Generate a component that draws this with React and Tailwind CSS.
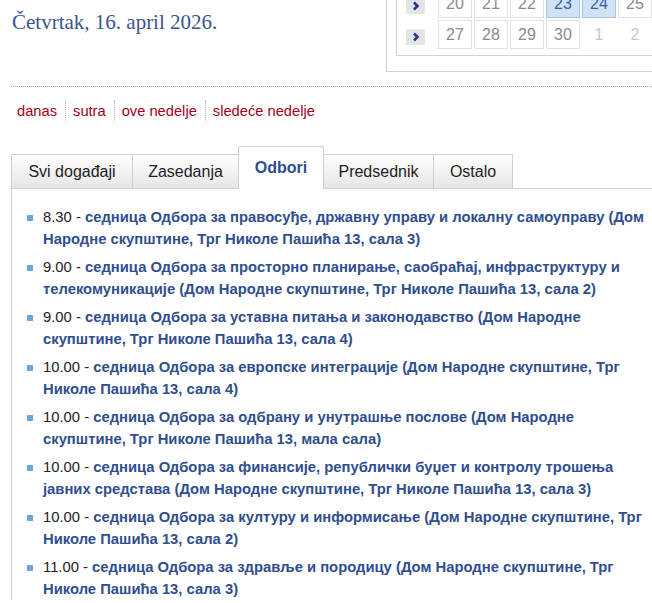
const items = [
  ['8.30', 'седница Одбора за правосуђе, државну управу и локалну самоуправу (Дом Народне скупштине, Трг Николе Пашића 13, сала 3)'],
  ['9.00', 'седница Одбора за просторно планирање, саобраћај, инфраструктуру и телекомуникације (Дом Народне скупштине, Трг Николе Пашића 13, сала 2)'],
  ['9.00', 'седница Одбора за уставна питања и законодавство (Дом Народне скупштине, Трг Николе Пашића 13, сала 4)'],
  ['10.00', 'седница Одбора за европске интеграције (Дом Народне скупштине, Трг Николе Пашића 13, сала 4)'],
  ['10.00', 'седница Одбора за одбрану и унутрашње послове (Дом Народне скупштине, Трг Николе Пашића 13, мала сала)'],
  ['10.00', 'седница Одбора за финансије, републички буџет и контролу трошења јавних средстава (Дом Народне скупштине, Трг Николе Пашића 13, сала 3)'],
  ['10.00', 'седница Одбора за културу и информисање (Дом Народне скупштине, Трг Николе Пашића 13, сала 2)'],
  ['11.00', 'седница Одбора за здравље и породицу (Дом Народне скупштине, Трг Николе Пашића 13, сала 3)'],
]

const weeks = [
  [
    { d: '20' }, { d: '21' }, { d: '22' }, { d: '23', sel: true }, { d: '24', sel: true }, { d: '25' }, { d: '26' },
  ],
  [
    { d: '27' }, { d: '28' }, { d: '29' }, { d: '30' }, { d: '1', out: true }, { d: '2', out: true }, { d: '3', out: true },
  ],
]

const tabs = ['Svi događaji', 'Zasedanja', 'Odbori', 'Predsednik', 'Ostalo']
const tabWidths = ['w-[122px]', 'w-[107px]', 'w-[86px]', 'w-[111px]', 'w-[80px]']

function Chevron() {
  return (
    <svg width="8" height="10" viewBox="0 0 8 10">
      <path d="M2 1.5 L5.5 5 L2 8.5" fill="none" stroke="#253a8c" strokeWidth="2.6" />
    </svg>
  )
}

function Calendar() {
  return (
    <div className="mt-[-14px] border border-[#d2d2d2] pl-[9px] pb-[15px] w-[320px] shrink-0">
      <div className="border border-[#d2d2d2] border-r-0 pl-[9px] pb-[6px]">
        <div className="flex flex-col gap-[2px] pt-px">
          {weeks.map((w, i) => (
            <div key={i} className="flex items-center">
              <div className="w-[19px] h-[16px] bg-[#e4e4e4] flex items-center justify-center mt-[4px]">
                <Chevron />
              </div>
              <div className="flex gap-[2px] ml-[13px]">
                {w.map((c) => (
                  <div
                    key={c.d}
                    className={
                      'w-[34px] h-[29px] flex items-center justify-center text-[16px] ' +
                      (c.sel
                        ? 'bg-[#cfe2f6] border border-[#a8c2e0] text-[#3b5ea6]'
                        : c.out
                        ? 'text-[#c8c8c8]'
                        : 'border border-[#e2e2e2] text-[#8a8a8a]')
                    }
                  >
                    {c.d}
                  </div>
                ))}
              </div>
            </div>
          ))}
        </div>
      </div>
    </div>
  )
}

export default function App() {
  return (
    <div className="w-[652px] h-[603px] overflow-hidden bg-white font-['Liberation_Sans',Arial,sans-serif]">
      {/* Header */}
      <div className="flex items-start h-[86px]">
        <div className="w-[386px] shrink-0 pl-[12px] pt-[8px]">
          <div className="font-['Liberation_Serif','Times_New_Roman',serif] text-[21px] leading-[28px] text-[#38558f]">
            Četvrtak, 16. april 2026.
          </div>
        </div>
        <Calendar />
      </div>

      <div className="ml-[11px] border-t border-dotted border-[#a6a6a6]" />

      {/* Quick links */}
      <ul className="flex ml-[17px] mt-[13px] text-[14.7px] leading-[22px] text-[#a3001a]">
        {['danas', 'sutra', 'ove nedelje', 'sledeće nedelje'].map((l, i) => (
          <li key={l} className={i === 0 ? 'pr-[8px]' : 'pl-[7px] pr-[8px] border-l border-dotted border-[#b5b5b5]'}>
            {l}
          </li>
        ))}
      </ul>

      {/* Tabs */}
      <div className="mt-[24px] ml-[11px]">
        <div className="flex items-end relative z-10 -mb-px">
          {tabs.map((t, i) =>
            t === 'Odbori' ? (
              <div
                key={t}
                className={`${tabWidths[i]} h-[43px] bg-white border border-b-0 border-[#cfcfcf] rounded-t-[3px] -ml-px flex items-center justify-center text-[16px] font-bold text-[#2e4d8f] pb-[1px]`}
              >
                {t}
              </div>
            ) : (
              <div
                key={t}
                className={`${tabWidths[i]} h-[35px] bg-gradient-to-b from-white to-[#e6e6e6] border border-[#cfcfcf] ${i === 0 ? '' : '-ml-px'} flex items-center justify-center text-[16px] text-[#1e1e1e]`}
              >
                {t}
              </div>
            )
          )}
        </div>

        <div className="border-t border-l border-[#cfcfcf] w-[660px] pt-[17px] pl-[15px]">
          <ul className="w-[628px] text-[14.8px] leading-[22px]">
            {items.map(([time, text], i) => (
              <li key={i} className="flex mb-[6px]">
                <span className="w-[6px] h-[6px] bg-[#6ea6dc] mt-[9px] shrink-0" />
                <span className="ml-[10px] text-[#222]">
                  {time} - <span className="font-bold text-[#2f4e8e]">{text}</span>
                </span>
              </li>
            ))}
          </ul>
        </div>
      </div>
    </div>
  )
}
